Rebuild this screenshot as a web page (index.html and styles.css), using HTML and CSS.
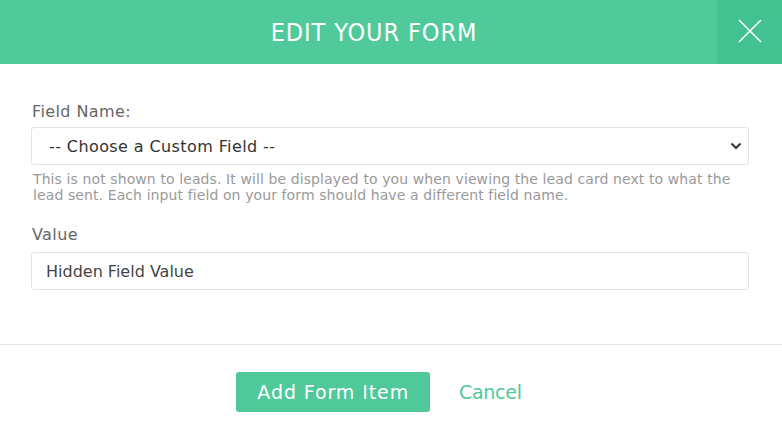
FILE: index.html
```html
<!DOCTYPE html>
<html lang="en">
<head>
    <meta charset="UTF-8">
    <title>Edit Your Form</title>
    <link rel="stylesheet" href="styles.css">
</head>
<body>
    <div class="modal">
        <div class="modal-header">
            <h2 class="modal-title">EDIT YOUR FORM</h2>
            <button class="close-btn" aria-label="Close">
                <svg width="26" height="26" viewBox="0 0 26 26">
                    <path d="M2 2 L24 24 M24 2 L2 24" stroke="#fff" stroke-width="1.6" fill="none"/>
                </svg>
            </button>
        </div>

        <div class="modal-body">
            <div class="form-group">
                <label for="fieldName">Field Name:</label>
                <div class="select-wrap">
                    <select id="fieldName">
                        <option>-- Choose a Custom Field --</option>
                    </select>
                    <svg class="chevron" width="12" height="8" viewBox="0 0 12 8">
                        <path d="M1.5 1.5 L6 6 L10.5 1.5" stroke="#333" stroke-width="2" fill="none"/>
                    </svg>
                </div>
                <p class="help">This is not shown to leads. It will be displayed to you when viewing the lead card next to what the lead sent. Each input field on your form should have a different field name.</p>
            </div>

            <div class="form-group">
                <label for="value">Value</label>
                <input type="text" id="value" value="Hidden Field Value">
            </div>
        </div>

        <div class="modal-footer">
            <button class="add-btn">Add Form Item</button>
            <a href="#" class="cancel-link">Cancel</a>
        </div>
    </div>
</body>
</html>
```

FILE: styles.css
```css
* {
    box-sizing: border-box;
    margin: 0;
    padding: 0;
}

body {
    font-family: Verdana, 'DejaVu Sans', sans-serif;
    background: #fff;
    color: #333;
}

.modal {
    width: 782px;
}

.modal-header {
    display: flex;
    height: 64px;
    background-color: #50ca9a;
}

.modal-title {
    flex: 1;
    display: flex;
    align-items: center;
    justify-content: center;
    padding-left: 31px;
    font-family: Tahoma, 'DejaVu Sans Condensed', 'DejaVu Sans', sans-serif;
    font-weight: normal;
    font-size: 25px;
    color: #fff;
    letter-spacing: 0.9px;
}

.close-btn {
    width: 65px;
    border: none;
    background-color: #41c290;
    display: flex;
    align-items: center;
    justify-content: center;
    padding-bottom: 2px;
    cursor: pointer;
}

.modal-body {
    padding: 38px 33px 54px 31px;
    border-bottom: 1px solid #e6e6e6;
}

.form-group + .form-group {
    margin-top: 22px;
}

label {
    display: block;
    font-size: 16px;
    line-height: 20px;
    letter-spacing: 0.4px;
    color: #666;
    margin-left: 1px;
    margin-bottom: 5px;
}

.form-group + .form-group label {
    margin-bottom: 7px;
}

.select-wrap {
    position: relative;
}

select,
input {
    width: 100%;
    height: 38px;
    border: 1px solid #e3e3e3;
    border-radius: 3px;
    background: #fff;
    font-family: inherit;
    font-size: 16px;
    color: #333;
    outline: none;
}

select {
    appearance: none;
    padding: 0 40px 0 17px;
    letter-spacing: 0.4px;
}

input {
    padding: 0 14px;
    color: #444;
}

.chevron {
    position: absolute;
    right: 7px;
    top: 15px;
}

.help {
    margin: 6px 2px 0;
    font-size: 14px;
    line-height: 16px;
    letter-spacing: 0.1px;
    color: #9a9a9a;
}

.modal-footer {
    display: flex;
    align-items: center;
    justify-content: center;
    gap: 29px;
    padding: 27px 0 14px;
    margin-left: -24px;
}

.add-btn {
    height: 40px;
    padding: 0 21px;
    border: none;
    border-radius: 3px;
    background-color: #50c99a;
    color: #fff;
    font-family: inherit;
    font-size: 19px;
    letter-spacing: 0.9px;
    cursor: pointer;
}

.cancel-link {
    color: #50c99a;
    font-size: 19px;
    letter-spacing: -0.3px;
    text-decoration: none;
}
```
